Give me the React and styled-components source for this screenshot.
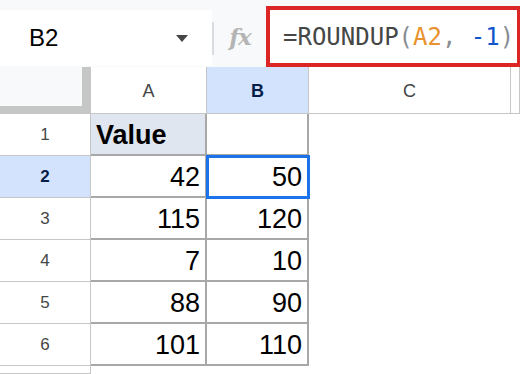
import React from 'react';
import styled, { createGlobalStyle } from 'styled-components';

const GlobalStyle = createGlobalStyle`
  html, body {
    margin: 0;
    padding: 0;
    background: #ffffff;
    font-family: "Liberation Sans", Arial, sans-serif;
    overflow: hidden;
  }
`

const Page = styled.div`
  width: 520px;
  height: 374px;
  overflow: hidden;
  background: #ffffff;
`

const FormulaBar = styled.div`
  display: flex;
  height: 67px;
  background: #f8f9fa;
`

const NameBox = styled.div`
  display: flex;
  align-items: center;
  justify-content: space-between;
  width: 212px;
  height: 56px;
  margin-top: 10px;
  padding: 0 24px 0 29px;
  box-sizing: border-box;
  background: #ffffff;
  font-size: 24px;
  color: #000;
`

const Caret = styled.span`
  width: 0;
  height: 0;
  border-left: 6px solid transparent;
  border-right: 6px solid transparent;
  border-top: 7px solid #444746;
`

const Divider = styled.div`
  width: 2px;
  height: 33px;
  margin-top: 22px;
  background: #dadce0;
`

const FxLabel = styled.div`
  width: 52px;
  display: flex;
  align-items: center;
  justify-content: center;
  padding-top: 6px;
  font-family: "DejaVu Serif", "Liberation Serif", serif;
  font-style: italic;
  font-weight: bold;
  font-size: 23px;
  color: #b4b4b4;
  letter-spacing: -1px;
`

const FormulaInput = styled.div`
  flex: 1;
  margin-top: 6px;
  border: 4px solid #dc2626;
  border-right-width: 3px;
  background: #ffffff;
  display: flex;
  align-items: center;
  padding-left: 13px;
  font-family: "DejaVu Sans Mono", "Liberation Mono", monospace;
  font-size: 24px;
  color: #444746;
  white-space: pre;
  overflow: hidden;
`

const Token = styled.span`
  color: ${p => p.tone === 'ref' ? '#e8912d' : p.tone === 'num' ? '#1155cc' : p.tone === 'punct' ? '#8a8f94' : '#444746'};
`

const Grid = styled.div`
  display: grid;
  grid-template-columns: 91px 116px 102px 202px 9px;
  grid-template-rows: 47px repeat(6, 42px) 8px;
`

const Corner = styled.div`
  background: #f8f9fa;
  border-right: 9px solid #c4c7c5;
  border-bottom: 8px solid #c4c7c5;
`

const ColHead = styled.div`
  display: flex;
  align-items: center;
  justify-content: center;
  border-right: 1px solid #c4c7c5;
  border-bottom: 1px solid #c4c7c5;
  background: ${p => p.active ? '#d3e3fd' : '#ffffff'};
  color: ${p => p.active ? '#041e49' : '#444746'};
  font-weight: ${p => p.active ? 'bold' : 'normal'};
  font-size: 18px;
  padding-top: 2px;
`

const RowHead = styled.div`
  display: flex;
  align-items: center;
  justify-content: center;
  border-right: 1px solid #c4c7c5;
  border-bottom: 1px solid #c4c7c5;
  background: ${p => p.active ? '#d3e3fd' : '#ffffff'};
  color: ${p => p.active ? '#041e49' : '#444746'};
  font-weight: ${p => p.active ? 'bold' : 'normal'};
  font-size: 17px;
`

const Cell = styled.div`
  position: relative;
  display: flex;
  align-items: flex-end;
  justify-content: ${p => p.align === 'left' ? 'flex-start' : 'flex-end'};
  padding: 0 5px 5px 5px;
  border-right: 2px solid ${p => p.bordered ? '#a8a8a8' : 'transparent'};
  border-bottom: 2px solid ${p => p.bordered ? '#a8a8a8' : 'transparent'};
  background: ${p => p.fill || '#ffffff'};
  font-size: 27px;
  font-weight: ${p => p.bold ? 'bold' : 'normal'};
  color: #000;
  line-height: 1;
  ${p => p.selected && `
    outline: 3px solid #1a73e8;
    outline-offset: -2px;
    z-index: 1;
  `}
`

const rows = [
  ['Value', ''],
  ['42', '50'],
  ['115', '120'],
  ['7', '10'],
  ['88', '90'],
  ['101', '110'],
]

export default function App() {
  return (
    <Page>
      <GlobalStyle />
      <FormulaBar>
        <NameBox>
          <span>B2</span>
          <Caret />
        </NameBox>
        <Divider />
        <FxLabel>fx</FxLabel>
        <FormulaInput>
          <Token>=ROUNDUP</Token>
          <Token tone="punct">(</Token>
          <Token tone="ref">A2</Token>
          <Token tone="punct">, </Token>
          <Token tone="num">-1</Token>
          <Token tone="punct">)</Token>
        </FormulaInput>
      </FormulaBar>
      <Grid>
        <Corner />
        <ColHead>A</ColHead>
        <ColHead active>B</ColHead>
        <ColHead>C</ColHead>
        <ColHead />
        {rows.map((r, i) => (
          <React.Fragment key={i}>
            <RowHead active={i === 1}>{i + 1}</RowHead>
            <Cell bordered align={i === 0 ? 'left' : 'right'} bold={i === 0} fill={i === 0 ? '#dfe6ef' : undefined}>{r[0]}</Cell>
            <Cell bordered selected={i === 1}>{r[1]}</Cell>
            <Cell />
            <Cell />
          </React.Fragment>
        ))}
        <RowHead />
        <Cell />
        <Cell />
        <Cell />
        <Cell />
      </Grid>
    </Page>
  );
}
